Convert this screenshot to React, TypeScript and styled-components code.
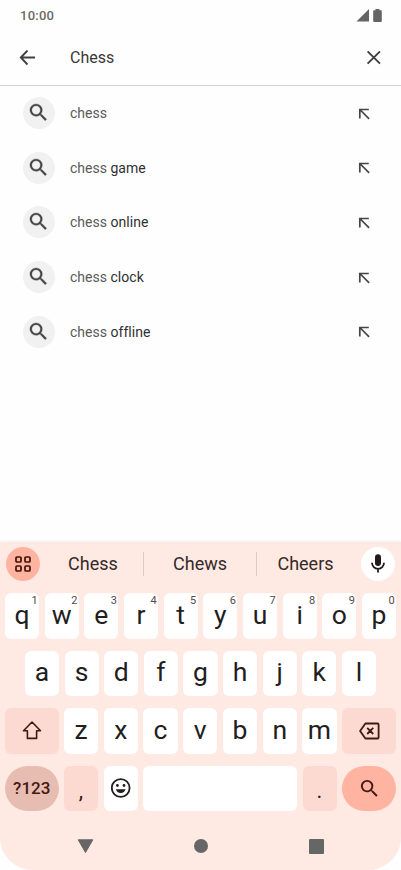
import React from "react";
import styled, { createGlobalStyle } from "styled-components";

const GlobalStyle = createGlobalStyle`
  * { box-sizing: border-box; }
  body { margin: 0; background: #fefefe; font-family: Roboto, "Noto Sans", sans-serif; }
  button { font-family: inherit; }
`;

const Screen = styled.main`
  width: 401px;
  height: 870px;
  display: flex;
  flex-direction: column;
  overflow: hidden;
  background: #fefefe;
`;

const StatusBar = styled.header`
  height: 30px;
  padding: 1px 19px 0 20px;
  display: flex;
  align-items: center;
  justify-content: space-between;
  color: #6a6a6a;
  font-size: 13px;
  font-weight: 500;
  letter-spacing: 0.25px;
`;

const StatusIcons = styled.div`
  display: flex;
  align-items: center;
  gap: 4px;
`;

const SearchBar = styled.div`
  height: 56px;
  padding: 0 19px 0 19px;
  display: flex;
  align-items: center;
  border-bottom: 1.5px solid #d2d2d2;
`;

const Query = styled.div`
  flex: 1;
  margin-left: 34px;
  font-size: 16px;
  line-height: 20px;
  color: #383838;
`;

const IconButton = styled.button`
  padding: 0;
  border: 0;
  background: none;
  color: #404040;
  display: flex;
`;

const Suggestions = styled.ul`
  margin: 0;
  padding: 0;
  list-style: none;
`;

const Suggestion = styled.li`
  height: 54.6px;
  padding: 0 30px 0 23px;
  display: flex;
  align-items: center;
`;

const IconDisc = styled.span`
  width: 32px;
  height: 32px;
  padding: 0 1px 1px 0;
  border-radius: 50%;
  background: #f1f1f1;
  color: #454545;
  display: flex;
  align-items: center;
  justify-content: center;
`;

const SuggestionText = styled.span`
  flex: 1;
  margin-left: 15px;
  font-size: 14px;
  color: #5a5a5a;
  b { font-weight: 400; color: #303030; letter-spacing: 0.06px; }
`;

const Keyboard = styled.section`
  margin-top: auto;
  height: 328px;
  padding: 0 5px;
  background: #fee9e3;
  border-radius: 0 0 33px 33px;
  box-shadow: 0 -1px 3px rgba(0, 0, 0, 0.06);
  display: flex;
  flex-direction: column;
`;

const WordBar = styled.div`
  height: 43px;
  margin: 0 0 8px;
  display: flex;
  align-items: center;
`;

const RoundButton = styled.button<{ $accent?: boolean }>`
  width: 34px;
  height: 34px;
  margin: 0 1px;
  padding: 0;
  border: 0;
  border-radius: 50%;
  background: ${(p) => (p.$accent ? "#ffb4a1" : "#ffffff")};
  color: ${(p) => (p.$accent ? "#421008" : "#211a1a")};
  display: flex;
  align-items: center;
  justify-content: center;
`;

const Words = styled.div`
  flex: 1;
  margin: 0 6px 0 0;
  display: grid;
  grid-template-columns: 102px 113px 1fr;
`;

const Word = styled.span`
  height: 24px;
  line-height: 24px;
  font-size: 18px;
  text-align: center;
  color: #352a28;
  &:first-child { padding-left: 2px; }
  & + & { border-left: 1px solid #dccac5; }
`;

const Rows = styled.div`
  display: flex;
  flex-direction: column;
  gap: 12px;
`;

const KeyRow = styled.div<{ $inset?: boolean }>`
  height: 45.5px;
  padding: 0 ${(p) => (p.$inset ? "20px" : "0")};
  display: flex;
  gap: 5.5px;
`;

const Key = styled.button<{ $tone?: "plain" | "soft" | "dark" | "accent"; $width?: number }>`
  position: relative;
  flex: ${(p) => (p.$width ? `0 0 ${p.$width}px` : "1 1 0")};
  min-width: 0;
  height: 100%;
  padding: 0;
  border: 0;
  border-radius: ${(p) => (p.$tone === "dark" || p.$tone === "accent" ? "23px" : "6px")};
  background: ${(p) =>
    ({ plain: "#ffffff", soft: "#fddad1", dark: "#e7bdb2", accent: "#ffb4a1" })[p.$tone ?? "plain"]};
  color: ${(p) => (p.$tone ? "#421812" : "#231e1e")};
  display: flex;
  align-items: center;
  justify-content: center;
`;

const Letter = styled.span`
  font-size: 26.5px;
  line-height: 30px;
  margin-top: -2px;
`;

const Hint = styled.sup`
  position: absolute;
  top: 2px;
  right: 1.5px;
  font-size: 11px;
  line-height: 12px;
  color: #55494a;
`;

const ModeLabel = styled.span`
  font-size: 17px;
  font-weight: 500;
`;

const Punctuation = styled.span`
  margin-top: 5px;
  font-size: 22px;
  line-height: 26px;
`;

const NavBar = styled.nav`
  flex: 1;
  padding: 11px 72.5px 0 71.5px;
  display: flex;
  align-items: center;
  justify-content: space-between;
`;

const SearchIcon = ({ size, weight = 0 }: { size: number; weight?: number }) => (
  <svg width={size} height={size} viewBox="0 0 24 24" fill="currentColor" stroke="currentColor" strokeWidth={weight}>
    <path d="M15.5 14h-.79l-.28-.27A6.47 6.47 0 0 0 16 9.5 6.5 6.5 0 1 0 9.5 16c1.61 0 3.09-.59 4.23-1.57l.27.28v.79l5 4.99L20.49 19zm-6 0a4.5 4.5 0 1 1 0-9 4.5 4.5 0 0 1 0 9z" />
  </svg>
);

const BackIcon = () => (
  <svg width="17" height="16" viewBox="0 0 17 16" fill="none" stroke="currentColor" strokeWidth="1.9">
    <path d="M16 7.5H2M8.5.5 1.8 7.5l6.7 7" />
  </svg>
);

const CloseIcon = () => (
  <svg width="16" height="16" viewBox="0 0 16 16" fill="none" stroke="currentColor" strokeWidth="1.9">
    <path d="m1.6 1.3 12.4 12.4M14 1.3 1.6 13.7" />
  </svg>
);

const InsertIcon = () => (
  <svg width="13" height="13" viewBox="0 0 13 13" fill="none" stroke="#454545" strokeWidth="1.7">
    <path d="M1.8 11.5v-9h9M1.8 2.5l9.3 9.4" />
  </svg>
);

const GridIcon = () => (
  <svg width="18" height="18" viewBox="0 0 18 18" fill="none" stroke="currentColor" strokeWidth="1.7">
    <rect x="2" y="2" width="5" height="5" rx="1" />
    <rect x="11" y="2" width="5" height="5" rx="1" />
    <rect x="2" y="11" width="5" height="5" rx="1" />
    <rect x="11" y="11" width="5" height="5" rx="1" />
  </svg>
);

const MicIcon = () => (
  <svg width="16" height="20" viewBox="0 0 16 20" fill="none">
    <rect x="5" y="0.3" width="6" height="11.8" rx="3" fill="currentColor" />
    <path d="M2 8.8a6 6 0 0 0 12 0M8 14.8v3.8" stroke="currentColor" strokeWidth="1.8" />
  </svg>
);

const ShiftIcon = () => (
  <svg width="20" height="19" viewBox="0 0 20 19" fill="none" stroke="currentColor" strokeWidth="1.6" strokeLinejoin="round">
    <path d="M10 1 1.5 9.8h3.9v7.6h9.2V9.8h3.9z" />
  </svg>
);

const BackspaceIcon = () => (
  <svg width="21" height="18" viewBox="0 0 21 18" fill="none" stroke="currentColor" strokeWidth="1.8" strokeLinejoin="round">
    <path d="M6.4 1.5h12.2a1 1 0 0 1 1 1v13a1 1 0 0 1-1 1H6.4L1.1 9zM8.2 5.8l6 6.2M14.2 5.8l-6 6.2" />
  </svg>
);

const EmojiIcon = () => (
  <svg width="20" height="20" viewBox="0 0 20 20" fill="currentColor">
    <circle cx="9.7" cy="10" r="8.9" fill="none" stroke="currentColor" strokeWidth="1.8" />
    <circle cx="6.4" cy="7.5" r="1.4" />
    <circle cx="13" cy="7.5" r="1.4" />
    <path d="M4.8 11.2h9.8a5.1 5.1 0 0 1-9.8 0z" />
  </svg>
);

const completions = ["", "game", "online", "clock", "offline"];
const letters = (row: string) => row.split("").map((c) => <Key key={c}><Letter>{c}</Letter></Key>);

export default function App() {
  return (
    <>
      <GlobalStyle />
      <Screen>
        <StatusBar>
          <span>10:00</span>
          <StatusIcons>
            <svg width="13" height="13" viewBox="0 0 13 13"><path d="M13 0v12.5H.5z" fill="#646464" /></svg>
            <svg width="9" height="13" viewBox="0 0 9 13"><path d="M2.5 0h4v1.3H8a.8.8 0 0 1 .8.8v10a.9.9 0 0 1-.9.9H1.1a.9.9 0 0 1-.9-.9v-10a.8.8 0 0 1 .8-.8h1.5z" fill="#646464" /></svg>
          </StatusIcons>
        </StatusBar>
        <SearchBar>
          <IconButton aria-label="Back"><BackIcon /></IconButton>
          <Query>Chess</Query>
          <IconButton aria-label="Clear"><CloseIcon /></IconButton>
        </SearchBar>
        <Suggestions>
          {completions.map((word) => (
            <Suggestion key={word}>
              <IconDisc><SearchIcon size={23} weight={0.3} /></IconDisc>
              <SuggestionText>chess{word && <> <b>{word}</b></>}</SuggestionText>
              <InsertIcon />
            </Suggestion>
          ))}
        </Suggestions>
        <Keyboard>
          <WordBar>
            <RoundButton $accent aria-label="Tools"><GridIcon /></RoundButton>
            <Words>
              <Word>Chess</Word>
              <Word>Chews</Word>
              <Word>Cheers</Word>
            </Words>
            <RoundButton aria-label="Voice input"><MicIcon /></RoundButton>
          </WordBar>
          <Rows>
            <KeyRow>
              {"qwertyuiop".split("").map((c, i) => (
                <Key key={c}><Letter>{c}</Letter><Hint>{(i + 1) % 10}</Hint></Key>
              ))}
            </KeyRow>
            <KeyRow $inset>{letters("asdfghjkl")}</KeyRow>
            <KeyRow>
              <Key $tone="soft" $width={53.5} aria-label="Shift"><ShiftIcon /></Key>
              {letters("zxcvbnm")}
              <Key $tone="soft" $width={54} aria-label="Delete"><BackspaceIcon /></Key>
            </KeyRow>
            <KeyRow>
              <Key $tone="dark" $width={53.5}><ModeLabel>?123</ModeLabel></Key>
              <Key $tone="soft" $width={34}><Punctuation>,</Punctuation></Key>
              <Key $width={34} aria-label="Emoji"><EmojiIcon /></Key>
              <Key aria-label="Space" />
              <Key $tone="soft" $width={34}><Punctuation>.</Punctuation></Key>
              <Key $tone="accent" $width={54} aria-label="Search"><SearchIcon size={23} /></Key>
            </KeyRow>
          </Rows>
          <NavBar>
            <svg width="17" height="15" viewBox="0 0 17 15"><path d="M1.2.8h14.6L8.5 13.5z" fill="#666" stroke="#666" strokeLinejoin="round" /></svg>
            <svg width="14" height="14" viewBox="0 0 14 14"><circle cx="7" cy="7" r="7" fill="#666" /></svg>
            <svg width="15" height="15" viewBox="0 0 15 15"><rect width="15" height="15" rx="1" fill="#666" /></svg>
          </NavBar>
        </Keyboard>
      </Screen>
    </>
  );
}
